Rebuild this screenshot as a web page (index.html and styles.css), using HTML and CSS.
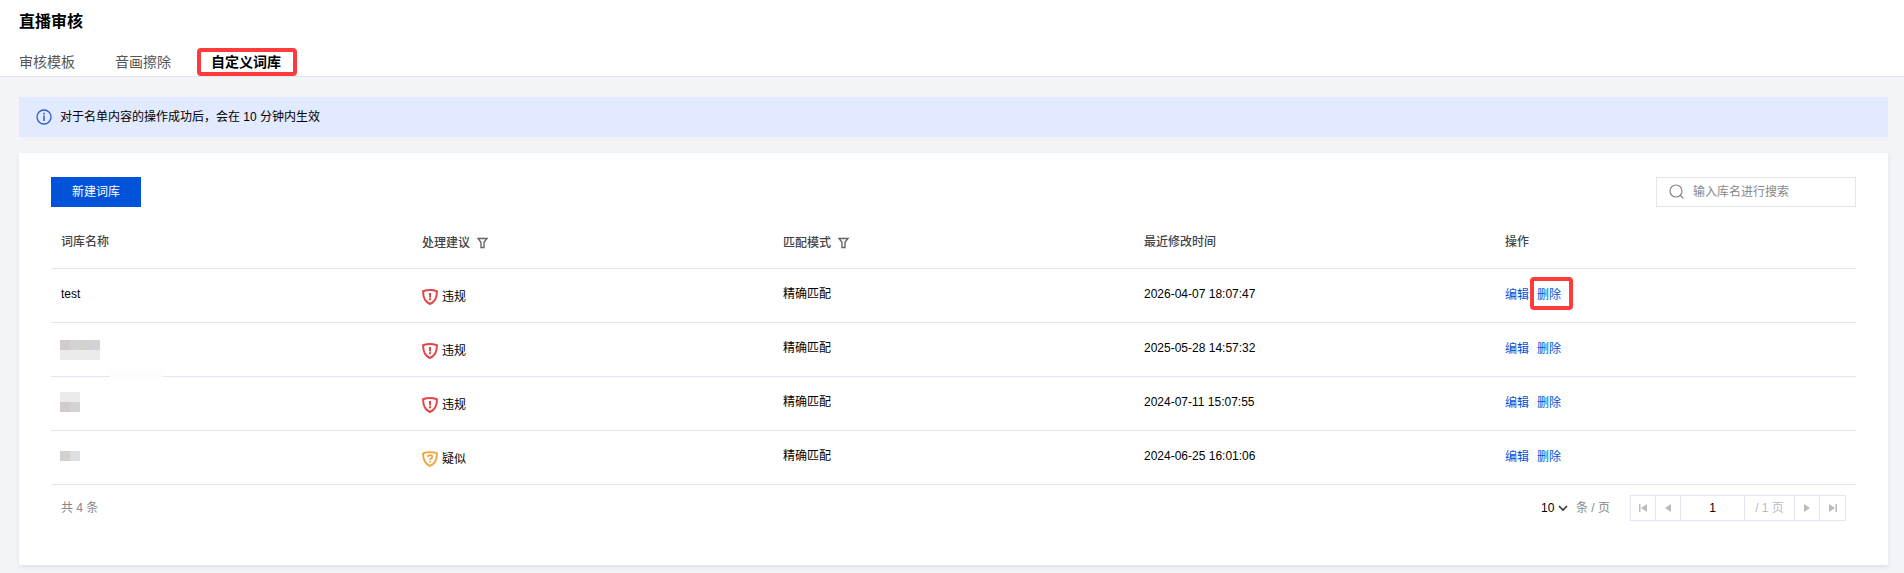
FILE: index.html
```html
<!DOCTYPE html>
<html lang="zh-CN">
<head>
    <meta charset="UTF-8">
    <meta name="viewport" content="width=device-width, initial-scale=1.0">
    <title>直播审核</title>
    <link rel="stylesheet" href="styles.css">
</head>
<body>
    <!-- Shared icons -->
    <svg class="icon-defs" width="0" height="0">
        <symbol id="icon-filter" viewBox="0 0 12 12">
            <path d="M1 1.5h9L7 5.3v5.2H4V5.3z" fill="none" stroke="#666" stroke-width="1.4"/>
        </symbol>
        <symbol id="icon-block" viewBox="0 0 16 16">
            <path d="M8 1.1C5.6 1.1 3.4 1.5 1.1 2.3 1 8.2 2.6 12.6 8 15c5.4-2.4 7-6.8 6.9-12.7C12.6 1.5 10.4 1.1 8 1.1z" fill="none" stroke="#e54545" stroke-width="2"/>
            <path d="M8 4v4.4M8 9.3v2" fill="none" stroke="#e54545" stroke-width="2"/>
        </symbol>
        <symbol id="icon-suspect" viewBox="0 0 16 16">
            <path d="M8 1.1C5.6 1.1 3.4 1.5 1.1 2.3 1 8.2 2.6 12.6 8 15c5.4-2.4 7-6.8 6.9-12.7C12.6 1.5 10.4 1.1 8 1.1z" fill="none" stroke="#f2a33c" stroke-width="1.9"/>
            <path d="M5.8 6.2C5.8 4.8 6.7 4.2 8 4.2s2.3.7 2.3 1.8C10.3 7.5 8 7.5 8 9M8 10v1.6" fill="none" stroke="#f2a33c" stroke-width="1.7"/>
        </symbol>
    </svg>

    <header class="page-header">
        <h1>直播审核</h1>
        <nav class="tabs">
            <a href="#template">审核模板</a>
            <a href="#erase">音画擦除</a>
            <a href="#lexicon" class="active marked">自定义词库</a>
        </nav>
    </header>

    <main class="content">
        <div class="alert">
            <svg width="16" height="16" viewBox="0 0 16 16">
                <circle cx="8" cy="8" r="7" fill="none" stroke="#2b5bd0" stroke-width="1.3"/>
                <path d="M8 3.8v1.6M8 6.6v5.4" stroke="#2b5bd0" stroke-width="1.5"/>
            </svg>
            <span>对于名单内容的操作成功后，会在 10 分钟内生效</span>
        </div>

        <section class="card">
            <div class="toolbar">
                <button type="button" class="btn-primary">新建词库</button>
                <label class="search">
                    <svg width="16" height="16" viewBox="0 0 16 16">
                        <circle cx="7" cy="7" r="6" fill="none" stroke="#888" stroke-width="1.2"/>
                        <path d="M11.2 11.2l3.2 3.2" stroke="#888" stroke-width="1.3"/>
                    </svg>
                    <input type="text" placeholder="输入库名进行搜索" aria-label="输入库名进行搜索">
                </label>
            </div>

            <table class="lexicon-table">
                <thead>
                    <tr>
                        <th>词库名称</th>
                        <th><span class="filter">处理建议 <svg width="12" height="12"><use href="#icon-filter"/></svg></span></th>
                        <th><span class="filter">匹配模式 <svg width="12" height="12"><use href="#icon-filter"/></svg></span></th>
                        <th>最近修改时间</th>
                        <th>操作</th>
                    </tr>
                </thead>
                <tbody>
                    <tr>
                        <td>test</td>
                        <td><span class="status"><svg width="16" height="16"><use href="#icon-block"/></svg>违规</span></td>
                        <td>精确匹配</td>
                        <td>2026-04-07 18:07:47</td>
                        <td><div class="actions"><a href="#edit">编辑</a><a href="#delete" class="marked">删除</a></div></td>
                    </tr>
                    <tr>
                        <td class="redacted">
                            <div class="mosaic wide">
                                <i class="rose"></i><i class="gray"></i><i class="sand"></i><i class="gray"></i>
                                <i class="light"></i><i class="light"></i><i class="light"></i><i class="light"></i>
                            </div>
                            <span class="smudge"></span>
                        </td>
                        <td><span class="status"><svg width="16" height="16"><use href="#icon-block"/></svg>违规</span></td>
                        <td>精确匹配</td>
                        <td>2025-05-28 14:57:32</td>
                        <td><div class="actions"><a href="#edit">编辑</a><a href="#delete">删除</a></div></td>
                    </tr>
                    <tr>
                        <td class="redacted">
                            <div class="mosaic">
                                <i class="light"></i><i class="light"></i>
                                <i class="rose"></i><i class="gray"></i>
                            </div>
                        </td>
                        <td><span class="status"><svg width="16" height="16"><use href="#icon-block"/></svg>违规</span></td>
                        <td>精确匹配</td>
                        <td>2024-07-11 15:07:55</td>
                        <td><div class="actions"><a href="#edit">编辑</a><a href="#delete">删除</a></div></td>
                    </tr>
                    <tr>
                        <td class="redacted">
                            <div class="mosaic">
                                <i class="sand"></i><i class="pale"></i>
                            </div>
                        </td>
                        <td><span class="status"><svg width="16" height="16"><use href="#icon-suspect"/></svg>疑似</span></td>
                        <td>精确匹配</td>
                        <td>2024-06-25 16:01:06</td>
                        <td><div class="actions"><a href="#edit">编辑</a><a href="#delete">删除</a></div></td>
                    </tr>
                </tbody>
            </table>

            <div class="table-footer">
                <span class="total">共 4 条</span>
                <div class="page-size">
                    <div class="select-wrap">
                        <select id="page-size">
                            <option>10</option>
                            <option>20</option>
                            <option>50</option>
                        </select>
                        <svg width="10" height="8" viewBox="0 0 10 8"><path d="M1 2l4 4 4-4" fill="none" stroke="#333" stroke-width="1.6"/></svg>
                    </div>
                    <label for="page-size">条 / 页</label>
                </div>
                <div class="pager">
                    <button type="button" aria-label="第一页"><svg width="10" height="10" viewBox="0 0 10 10"><path d="M1 1h1.5v8H1zM9 1v8L3 5z" fill="#bbb"/></svg></button>
                    <button type="button" aria-label="上一页"><svg width="10" height="10" viewBox="0 0 10 10"><path d="M8 1v8L2 5z" fill="#bbb"/></svg></button>
                    <input type="text" value="1" aria-label="页码">
                    <span>/ 1 页</span>
                    <button type="button" aria-label="下一页"><svg width="10" height="10" viewBox="0 0 10 10"><path d="M2 1v8l6-4z" fill="#bbb"/></svg></button>
                    <button type="button" aria-label="最后一页"><svg width="10" height="10" viewBox="0 0 10 10"><path d="M7.5 1H9v8H7.5zM1 1v8l6-4z" fill="#bbb"/></svg></button>
                </div>
            </div>
        </section>
    </main>
</body>
</html>
```

FILE: styles.css
```css
* {
    box-sizing: border-box;
}
body {
    margin: 0;
    background-color: #f2f4f8;
    color: #000;
    font-family: "Liberation Sans", "Noto Sans CJK SC", sans-serif;
    font-size: 12px;
    line-height: 18px;
}
a {
    color: #0052d9;
    text-decoration: none;
}
svg {
    display: block;
    flex: none;
}
button, input, select {
    font: inherit;
    border: none;
    outline: none;
    padding: 0;
    background: none;
}
button {
    cursor: pointer;
}
.icon-defs {
    position: absolute;
}

/* Header */
.page-header {
    background-color: #fff;
    border-bottom: 1px solid #e3e6ee;
    padding: 11px 19px 3px;
}
.page-header h1 {
    margin: 0 0 18px;
    font-size: 16px;
    line-height: 22px;
}
.tabs {
    display: flex;
    gap: 40px;
    font-size: 14px;
    line-height: 22px;
}
.tabs a {
    color: #555;
}
.tabs .active {
    color: #000;
    font-weight: bold;
}

/* Red highlight frame */
.marked {
    position: relative;
}
.marked::after {
    content: "";
    position: absolute;
    inset: -3px -16px -3px -14px;
    border: 4px solid #ff3b3b;
    border-radius: 4px;
}
.actions .marked::after {
    inset: -9px -12px -6px -7px;
}

.content {
    padding: 20px 16px 8px 19px;
}
.alert {
    display: flex;
    align-items: center;
    gap: 8px;
    height: 40px;
    padding: 0 17px;
    background-color: #e1eaff;
}
.card {
    margin-top: 16px;
    padding: 24px 32px 44px;
    background-color: #fff;
    box-shadow: 0 2px 4px rgba(54, 58, 80, 0.1);
}
.toolbar {
    display: flex;
    justify-content: space-between;
}
.btn-primary {
    width: 90px;
    height: 30px;
    background-color: #0052d9;
    color: #fff;
}
.search {
    display: flex;
    align-items: center;
    gap: 8px;
    width: 200px;
    height: 30px;
    padding: 0 12px;
    border: 1px solid #e3e6ee;
}
.search input {
    flex: 1;
    min-width: 0;
}
.search input::placeholder {
    color: #888;
}

/* Table */
.lexicon-table {
    width: 100%;
    margin-top: 8px;
    table-layout: fixed;
    border-collapse: separate;
    border-spacing: 0;
}
.lexicon-table th,
.lexicon-table td {
    position: relative;
    height: 54px;
    padding: 16px 10px 0;
    border-bottom: 1px solid #e3e6ee;
    text-align: left;
    vertical-align: top;
}
.lexicon-table th {
    padding-top: 18px;
    color: #444;
    font-weight: 500;
}
.lexicon-table .redacted {
    padding: 15px 9px 0;
}
.filter {
    display: flex;
    align-items: center;
    gap: 7px;
    padding-top: 1px;
}
.status {
    display: flex;
    align-items: center;
    gap: 4px;
    padding-top: 3px;
}
.actions {
    display: flex;
    gap: 8px;
    padding-top: 1px;
}
.mosaic {
    display: grid;
    grid-template-columns: repeat(2, 10px);
    grid-auto-rows: 10px;
    align-content: center;
    min-height: 20px;
}
.mosaic.wide {
    grid-template-columns: repeat(4, 10px);
    padding-top: 2px;
}
.mosaic .rose {
    background-color: #d3cbcb;
}
.mosaic .gray {
    background-color: #d3d3d6;
}
.mosaic .sand {
    background-color: #d2d1ce;
}
.mosaic .light {
    background-color: #ebebeb;
}
.mosaic .pale {
    background-color: #dde0e3;
}
.smudge {
    position: absolute;
    left: 59px;
    bottom: -3px;
    width: 53px;
    height: 9px;
    background-color: #fdfdfd;
}

/* Footer */
.table-footer {
    display: flex;
    align-items: center;
    margin-top: 10px;
    padding: 0 10px;
    color: #888;
}
.page-size {
    display: flex;
    align-items: center;
    gap: 8px;
    margin-left: auto;
}
.select-wrap {
    position: relative;
}
.select-wrap select {
    display: block;
    width: 27px;
    appearance: none;
    color: #000;
}
.select-wrap svg {
    position: absolute;
    top: 5px;
    right: 0;
    pointer-events: none;
}
.pager {
    display: flex;
    height: 26px;
    margin-left: 20px;
    border: 1px solid #e3e6ee;
}
.pager > * {
    display: flex;
    align-items: center;
    justify-content: center;
    width: 25px;
    border-right: 1px solid #e3e6ee;
}
.pager > :last-child {
    border-right: none;
}
.pager input {
    width: 64px;
    color: #000;
    text-align: center;
}
.pager span {
    width: 50px;
    color: #bbb;
}
```
